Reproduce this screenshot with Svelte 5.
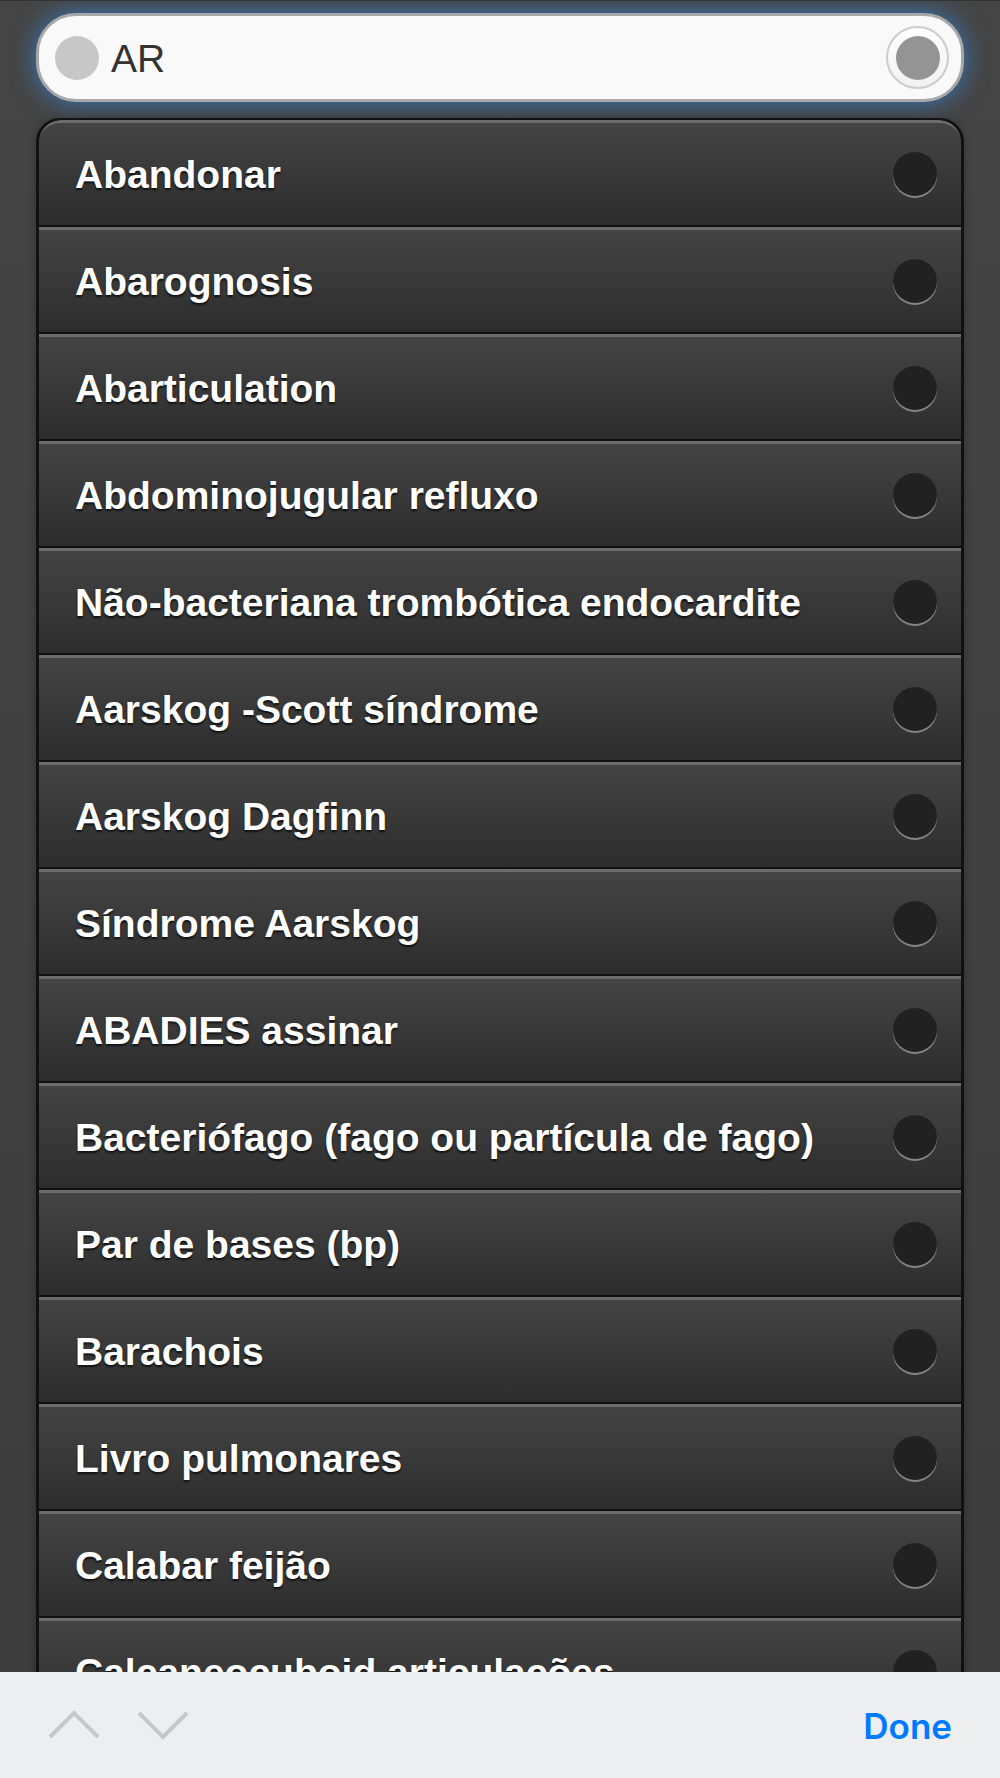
<script lang="ts">
    const terms: string[] = [
        'Abandonar',
        'Abarognosis',
        'Abarticulation',
        'Abdominojugular refluxo',
        'Não-bacteriana trombótica endocardite',
        'Aarskog -Scott síndrome',
        'Aarskog Dagfinn',
        'Síndrome Aarskog',
        'ABADIES assinar',
        'Bacteriófago (fago ou partícula de fago)',
        'Par de bases (bp)',
        'Barachois',
        'Livro pulmonares',
        'Calabar feijão',
        'Calcaneocuboid articulações'
    ];

    let query = $state('AR');
    let input: HTMLInputElement;

    function clearQuery() {
        query = '';
        input.focus();
    }
</script>

<div class="page">
    <main class="content">
        <form class="search" role="search" onsubmit={(e) => e.preventDefault()}>
            <span class="dot search-dot"></span>
            <input bind:this={input} bind:value={query} type="text" aria-label="Pesquisar" autocomplete="off" />
            <button class="clear" type="button" aria-label="Limpar" onclick={clearQuery}>
                <span class="dot clear-dot"></span>
            </button>
        </form>

        <ul class="list">
            {#each terms as term}
                <li>
                    <a class="row" href="#term">
                        <span class="label">{term}</span>
                        <span class="dot row-dot"></span>
                    </a>
                </li>
            {/each}
        </ul>
    </main>

    <footer class="toolbar">
        <button class="nav" type="button" aria-label="Anterior">
            <svg width="54" height="32" viewBox="0 0 54 32" fill="none" stroke="currentColor" stroke-width="4"><path d="M3 27L27 3L51 27"></path></svg>
        </button>
        <button class="nav" type="button" aria-label="Seguinte">
            <svg width="54" height="32" viewBox="0 0 54 32" fill="none" stroke="currentColor" stroke-width="4"><path d="M3 3L27 27L51 3"></path></svg>
        </button>
        <button class="done" type="button">Done</button>
    </footer>
</div>

<style>
    :global(body) {
        margin: 0;
        background: #404040;
    }

    .page {
        display: flex;
        flex-direction: column;
        height: 100vh;
        box-sizing: border-box;
        border-top: 1px solid #333;
        background: linear-gradient(#454545, #3c3c3c);
        font-family: 'Liberation Sans', Arial, sans-serif;
    }

    .content {
        flex: 1;
        min-height: 0;
        overflow: hidden;
        padding: 12px 36px 0;
    }

    .search {
        display: flex;
        align-items: center;
        gap: 12px;
        height: 89px;
        box-sizing: border-box;
        padding: 0 12px 0 16px;
        border: 3px solid #a8a8a8;
        border-radius: 40px;
        background: #f9f9f9;
        box-shadow: 0 0 24px #387bbe;
    }

    .search input {
        flex: 1;
        min-width: 0;
        padding: 2px 0 0;
        border: none;
        outline: none;
        background: transparent;
        color: #333;
        font-family: inherit;
        font-size: 39px;
    }

    .dot {
        flex: none;
        width: 44px;
        height: 44px;
        border-radius: 50%;
    }

    .search-dot {
        background: #c7c7c7;
    }

    .clear {
        display: flex;
        align-items: center;
        justify-content: center;
        flex: none;
        width: 63px;
        height: 63px;
        padding: 0;
        border: 2px solid #ccc;
        border-radius: 50%;
        background: linear-gradient(#fff, #f1f1f1);
        cursor: pointer;
    }

    .clear-dot {
        background: #949494;
    }

    .list {
        margin: 16px 0 0;
        padding: 0;
        list-style: none;
        overflow: hidden;
        border: solid #111;
        border-width: 2px 3px;
        border-radius: 24px;
        background: #111;
        box-shadow: 0 2px 8px rgba(0, 0, 0, 0.3);
    }

    .row {
        display: flex;
        align-items: center;
        justify-content: space-between;
        height: 105px;
        box-sizing: border-box;
        padding: 0 24px 1px 36px;
        border-top: 3px solid #6c6c6c;
        background: linear-gradient(#444, #2d2d2d);
        color: #fff;
        font-size: 39px;
        font-weight: bold;
        text-decoration: none;
        text-shadow: 0 2px 2px #111;
    }

    li + li {
        border-top: 2px solid #111;
    }

    li:first-child .row {
        border-radius: 22px 22px 0 0;
    }

    .label {
        padding-top: 2px;
        white-space: nowrap;
        line-height: 48px;
    }

    .row-dot {
        background: #212121;
        box-shadow: 0 2px 0 #858585;
    }

    .toolbar {
        display: flex;
        align-items: center;
        gap: 35px;
        height: 106px;
        box-sizing: border-box;
        padding: 2px 48px 0 47px;
        background: #edeef0;
    }

    .nav {
        display: flex;
        padding: 0;
        border: none;
        background: transparent;
        color: #c6c7c8;
        cursor: pointer;
    }

    .done {
        margin-left: auto;
        padding: 0;
        border: none;
        background: transparent;
        color: #007aff;
        font-family: Inter, 'Liberation Sans', sans-serif;
        font-size: 35px;
        font-weight: 600;
        line-height: 48px;
        cursor: pointer;
    }
</style>
